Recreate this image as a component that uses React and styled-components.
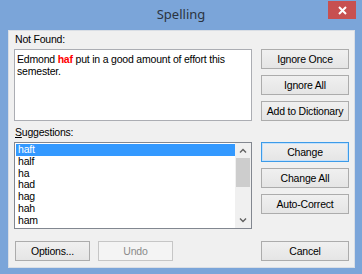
import React from "react";
import styled, { createGlobalStyle } from "styled-components";

const GlobalStyle = createGlobalStyle`
  html, body {
    margin: 0;
    padding: 0;
    background: #7ba5d9;
  }
  * {
    box-sizing: border-box;
  }
`;

const suggestions = ["haft", "half", "ha", "had", "hag", "hah", "ham", "hap"];

const App = () => {
  return (
    <>
      <GlobalStyle />
      <Frame>
        <TitleBar>
          <Title>Spelling</Title>
          <CloseButton>
            <svg width="9" height="9" viewBox="0 0 9 9">
              <path d="M1 1 L8 8 M8 1 L1 8" stroke="#fff" strokeWidth="2" />
            </svg>
          </CloseButton>
        </TitleBar>
        <Client>
          <Label>Not Found:</Label>
          <Row>
            <TextBox>
              Edmond <Bad>haf</Bad> put in a good amount of effort this semester.
            </TextBox>
            <ButtonColumn>
              <Button>Ignore Once</Button>
              <Button>Ignore All</Button>
              <Button>Add to Dictionary</Button>
            </ButtonColumn>
          </Row>
          <Label $gap>
            <u>S</u>uggestions:
          </Label>
          <Row>
            <ListBox>
              <Items>
                {suggestions.map((word, i) => (
                  <Item key={word} $selected={i === 0}>
                    {word}
                  </Item>
                ))}
              </Items>
              <ScrollBar>
                <Arrow>
                  <svg width="8" height="5" viewBox="0 0 8 5">
                    <path d="M1 4.5 L4 1.5 L7 4.5" stroke="#606060" strokeWidth="1.4" fill="none" />
                  </svg>
                </Arrow>
                <Track>
                  <Thumb />
                </Track>
                <Arrow>
                  <svg width="8" height="5" viewBox="0 0 8 5">
                    <path d="M1 0.5 L4 3.5 L7 0.5" stroke="#606060" strokeWidth="1.4" fill="none" />
                  </svg>
                </Arrow>
              </ScrollBar>
            </ListBox>
            <ButtonColumn>
              <Button $focused>Change</Button>
              <Button>Change All</Button>
              <Button>Auto-Correct</Button>
            </ButtonColumn>
          </Row>
          <BottomRow>
            <Button $small>Options...</Button>
            <Button $small disabled>
              Undo
            </Button>
            <Spacer />
            <Button>Cancel</Button>
          </BottomRow>
        </Client>
      </Frame>
    </>
  );
};

const Frame = styled.div`
  width: 362px;
  height: 274px;
  background: #7ba5d9;
  display: flex;
  flex-direction: column;
  font-family: "Liberation Sans", Arial, sans-serif;
  font-size: 10.5px;
  letter-spacing: -0.2px;
  color: #000;
`;

const TitleBar = styled.div`
  position: relative;
  height: 30px;
  display: flex;
  align-items: center;
  justify-content: center;
  padding-bottom: 2px;
`;

const Title = styled.div`
  font-family: "Noto Sans", "Open Sans", sans-serif;
  font-size: 13px;
  letter-spacing: 0;
  color: #2b3440;
`;

const CloseButton = styled.div`
  position: absolute;
  top: 1px;
  right: 6px;
  width: 28px;
  height: 18px;
  background: #c75050;
  display: flex;
  align-items: center;
  justify-content: center;
`;

const Client = styled.div`
  margin: 0 7px 6px 8px;
  flex: 1;
  background: #f0f0f0;
  border: 1px solid #d9dee5;
  padding: 1px 5px 0 5px;
  display: flex;
  flex-direction: column;
`;

const Label = styled.div`
  height: 14px;
  line-height: 14px;
  margin-top: ${(p) => (p.$gap ? "4px" : "0")};
  margin-bottom: 3px;
  padding-left: 1px;
`;

const Row = styled.div`
  display: flex;
  gap: 9px;
  align-items: flex-start;
`;

const TextBox = styled.div`
  width: 238px;
  height: 72px;
  background: #fff;
  border: 1px solid #abadb3;
  padding: 3px 2px;
  line-height: 12px;
`;

const Bad = styled.span`
  color: #ff0000;
  font-weight: bold;
`;

const ButtonColumn = styled.div`
  display: flex;
  flex-direction: column;
  gap: 6px;
`;

const Button = styled.button`
  width: ${(p) => (p.$small ? "75px" : "88px")};
  height: 20px;
  padding: 0;
  font-family: "Liberation Sans", Arial, sans-serif;
  font-size: 10.5px;
  letter-spacing: -0.2px;
  color: #000;
  background: linear-gradient(#f0f0f0, #e5e5e5);
  border: 1px solid ${(p) => (p.$focused ? "#3c9be8" : "#acacac")};
  box-shadow: ${(p) => (p.$focused ? "inset 0 0 0 1px #c4e0fa" : "none")};
  border-radius: 0;

  &:disabled {
    color: #8a8a8a;
    background: #f4f4f4;
    border-color: #c6c6c6;
  }
`;

const ListBox = styled.div`
  width: 238px;
  height: 87px;
  background: #fff;
  border: 1px solid #828790;
  display: flex;
  overflow: hidden;
`;

const Items = styled.div`
  flex: 1;
  padding: 1px 0 0 1px;
`;

const Item = styled.div`
  height: 11.8px;
  line-height: 11.8px;
  padding-left: 2px;
  background: ${(p) => (p.$selected ? "#3399ff" : "transparent")};
  color: ${(p) => (p.$selected ? "#fff" : "#000")};
`;

const ScrollBar = styled.div`
  width: 16px;
  background: #f0f0f0;
  display: flex;
  flex-direction: column;
`;

const Arrow = styled.div`
  height: 15px;
  display: flex;
  align-items: center;
  justify-content: center;
`;

const Track = styled.div`
  flex: 1;
  padding: 0 1px;
`;

const Thumb = styled.div`
  height: 29px;
  background: #cdcdcd;
`;

const BottomRow = styled.div`
  display: flex;
  gap: 8px;
  margin-top: 12px;
  padding-left: 1px;
`;

const Spacer = styled.div`
  flex: 1;
`;

export default App;
